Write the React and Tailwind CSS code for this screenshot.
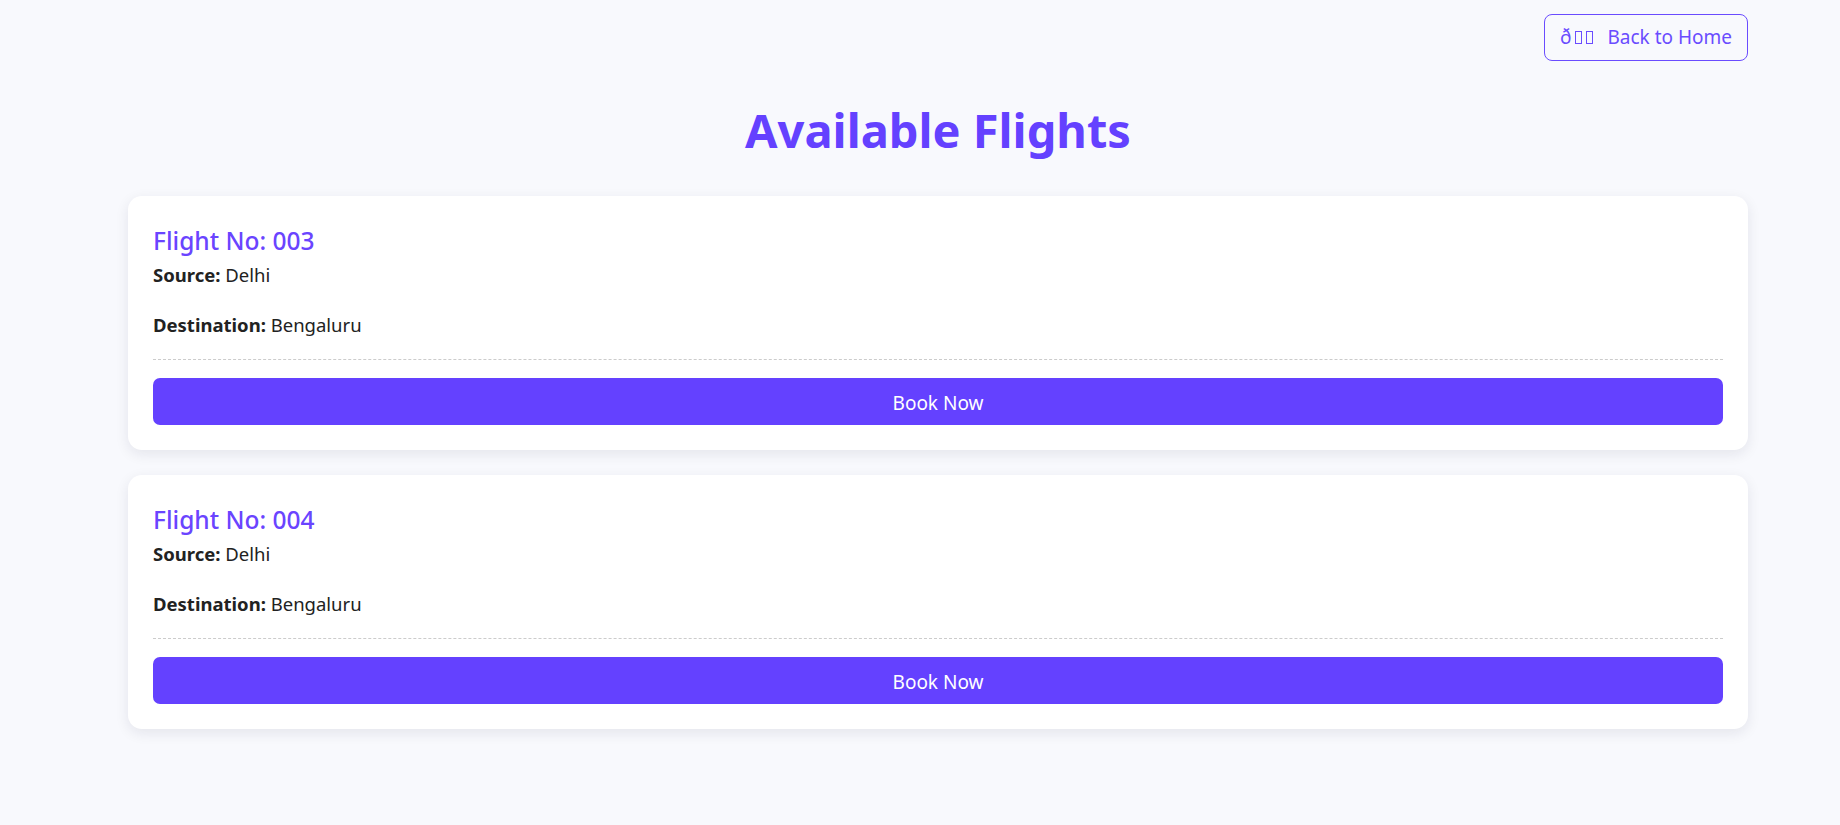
import React from 'react';

const flights = [
  { id: 1, flightNo: '003', source: 'Delhi', destination: 'Bengaluru' },
  { id: 2, flightNo: '004', source: 'Delhi', destination: 'Bengaluru' },
];

// broken emoji glyph, the way the page shows it
const Tofu = () => (
  <span className="inline-block w-[7px] h-[13px] border-[1.5px] border-[#6a4cff] align-[-1px]" />
);

const FlightCard = ({ flight }) => (
  <div className="bg-white rounded-[14px] shadow-[0_4px_14px_rgba(20,20,60,0.09)] px-[25px] pt-[25px] pb-[25px]">
    <h3 className="text-[24.5px] leading-[40px] font-medium text-[#6a44ff]">
      Flight No: {flight.flightNo}
    </h3>
    <p className="text-[18.5px] leading-[28px] text-[#222]">
      <span className="font-bold">Source:</span> {flight.source}
    </p>
    <p className="mt-[22px] text-[18.5px] leading-[28px] text-[#222]">
      <span className="font-bold">Destination:</span> {flight.destination}
    </p>
    <div className="mt-[20px] border-t border-dashed border-[#cccccc] pt-[18px]">
      <button className="w-full h-[47px] pt-[3px] rounded-[7px] bg-[#6441ff] text-white text-[19px]">
        Book Now
      </button>
    </div>
  </div>
);

const App = () => {
  return (
    <div
      className="min-h-[825px] bg-[#f8f9fd] pl-[128px] pr-[92px] pt-[14px]"
      style={{ fontFamily: '"Noto Sans", "Open Sans", sans-serif' }}
    >
      <div className="flex justify-end">
        <button className="h-[47px] w-[204px] rounded-[8px] border border-[#6a4cff] text-[#6a4cff] text-[19px] flex items-center justify-center gap-[4px]">
          <span className="flex items-center gap-[4px]">
            <span>ð</span>
            <Tofu />
            <Tofu />
          </span>
          <span className="ml-[10px]">Back to Home</span>
        </button>
      </div>

      <h1 className="text-center text-[47px] leading-[70px] font-bold text-[#6441ff] mt-[34px] mb-[31px]">
        Available Flights
      </h1>

      <div className="flex flex-col gap-[25px]">
        {flights.map((f) => (
          <FlightCard key={f.id} flight={f} />
        ))}
      </div>
    </div>
  );
};

export default App;
